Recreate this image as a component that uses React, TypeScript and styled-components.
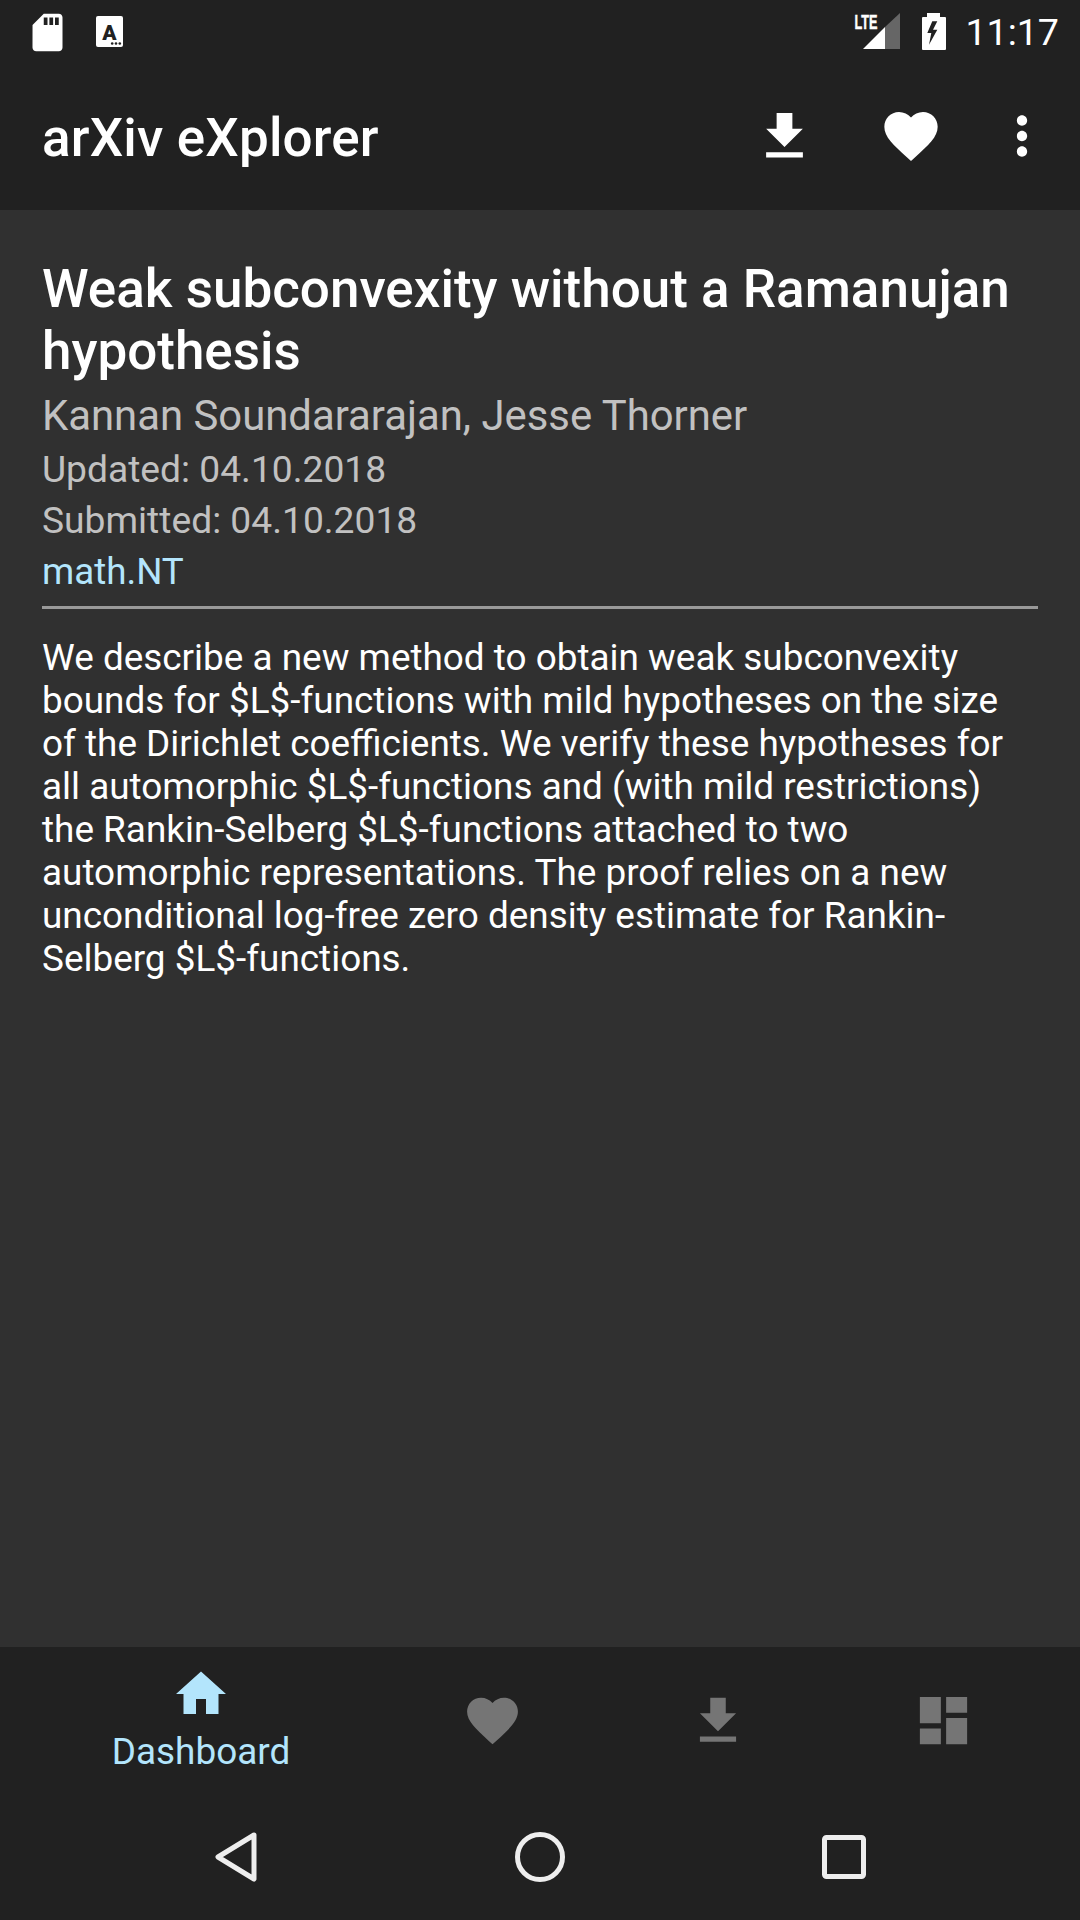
import React from 'react';
import styled, { createGlobalStyle } from 'styled-components';

const GlobalStyle = createGlobalStyle`
  html, body {
    margin: 0;
    padding: 0;
    background: #303030;
  }
  * {
    box-sizing: border-box;
  }
`;

const Screen = styled.div`
  width: 1080px;
  height: 1920px;
  display: flex;
  flex-direction: column;
  background: #303030;
  font-family: Roboto, 'Liberation Sans', sans-serif;
  overflow: hidden;
`;

const StatusBar = styled.div`
  height: 72px;
  flex: none;
  display: flex;
  align-items: center;
  justify-content: space-between;
  padding: 0 21px 8px 25px;
  background: #212121;
  color: #fff;
`;

const StatusGroup = styled.div`
  display: flex;
  align-items: center;
`;

const Clock = styled.span`
  margin-left: 19px;
  font-size: 37.6px;
  line-height: 48px;
`;

const AppBar = styled.header`
  height: 138px;
  flex: none;
  display: flex;
  align-items: center;
  justify-content: space-between;
  padding: 0 27px 6px 42px;
  background: #212121;
  color: #fff;
`;

const AppTitle = styled.h1`
  margin: 0;
  font-size: 53px;
  line-height: 62px;
  font-weight: 500;
  letter-spacing: 0.17px;
`;

const Actions = styled.div`
  display: grid;
  grid-template-columns: 94px 160px 62px;
  align-items: center;
  justify-items: center;
  margin-bottom: 4px;
`;

const Content = styled.main`
  flex: 1;
  padding: 48px 42px 0;
`;

const PaperTitle = styled.h2`
  margin: 0;
  font-size: 53px;
  line-height: 62px;
  font-weight: 500;
  color: #fff;
`;

const Authors = styled.div`
  margin-top: 10px;
  font-size: 41.85px;
  line-height: 47px;
  color: #c1c1c1;
`;

const Meta = styled.div<{ $accent?: boolean }>`
  font-size: ${({ $accent }) => ($accent ? '36.75px' : '37.2px')};
  line-height: 51px;
  color: ${({ $accent }) => ($accent ? '#b3e5fc' : '#c1c1c1')};
`;

const FirstMeta = styled(Meta)`
  margin-top: 5px;
`;

const Divider = styled.hr`
  height: 3px;
  margin: 9px 0 27px;
  border: 0;
  background: #999;
`;

const Abstract = styled.p`
  margin: 0;
  font-size: 36.9px;
  line-height: 43px;
  color: #fff;
`;

const BottomNav = styled.nav`
  height: 147px;
  flex: none;
  display: grid;
  grid-template-columns: 402px 180px 272px 178px;
  background: #212121;
`;

const Tab = styled.div<{ $active?: boolean }>`
  display: flex;
  flex-direction: column;
  align-items: center;
  justify-content: ${({ $active }) => ($active ? 'flex-start' : 'center')};
  padding-top: ${({ $active }) => ($active ? '17px' : '0')};
  color: ${({ $active }) => ($active ? '#b3e5fc' : '#757575')};
`;

const TabLabel = styled.span`
  margin-top: 7px;
  font-size: 36.9px;
  line-height: 42px;
`;

const SystemNav = styled.div`
  height: 126px;
  flex: none;
  display: grid;
  grid-template-columns: 472px 136px 472px;
  align-items: center;
  justify-items: center;
  background: #212121;
`;

const Glyph = styled.svg`
  display: block;
  flex: none;
`;

const KeyboardGlyph = styled(Glyph)`
  margin-left: 25px;
`;

const SignalGlyph = styled(Glyph)`
  margin-bottom: 6px;
`;

const BatteryGlyph = styled(Glyph)`
  margin-left: 22px;
`;

const Icon: React.FC<{ size: number; path: string }> = ({ size, path }) => (
  <Glyph width={size} height={size} viewBox="0 0 24 24" fill="currentColor">
    <path d={path} />
  </Glyph>
);

const paths = {
  sd: 'M18 2h-8L4.02 8 4 20c0 1.1.9 2 2 2h12c1.1 0 2-.9 2-2V4c0-1.1-.9-2-2-2zm-6 6h-2V4h2v4zm3 0h-2V4h2v4zm3 0h-2V4h2v4z',
  download: 'M19 9h-4V3H9v6H5l7 7 7-7zM5 18v2h14v-2H5z',
  heart: 'M12 21.35l-1.45-1.32C5.4 15.36 2 12.28 2 8.5 2 5.42 4.42 3 7.5 3c1.74 0 3.41.81 4.5 2.09C13.09 3.81 14.76 3 16.5 3 19.58 3 22 5.42 22 8.5c0 3.78-3.4 6.86-8.55 11.54L12 21.35z',
  more: 'M12 8c1.1 0 2-.9 2-2s-.9-2-2-2-2 .9-2 2 .9 2 2 2zm0 2c-1.1 0-2 .9-2 2s.9 2 2 2 2-.9 2-2-.9-2-2-2zm0 6c-1.1 0-2 .9-2 2s.9 2 2 2 2-.9 2-2-.9-2-2-2z',
  home: 'M10 20v-6h4v6h5v-8h3L12 3 2 12h3v8z',
  dashboard: 'M3 13h8V3H3v10zm0 8h8v-6H3v6zm10 0h8V11h-8v10zm0-18v6h8V3h-8z',
};

const KeyboardIcon = () => (
  <KeyboardGlyph width="30" height="32" viewBox="0 0 30 32">
    <rect x="1" y="0" width="27" height="31" rx="2" fill="#fff" />
    <text
      x="14.5"
      y="24"
      textAnchor="middle"
      fontFamily="Roboto, sans-serif"
      fontSize="21"
      fontWeight="900"
      fill="#212121"
    >
      A
    </text>
    <circle cx="17.2" cy="27.5" r="1.3" fill="#212121" />
    <circle cx="21" cy="27.5" r="1.3" fill="#212121" />
    <circle cx="24.8" cy="27.5" r="1.3" fill="#212121" />
  </KeyboardGlyph>
);

const SignalIcon = () => (
  <SignalGlyph width="46" height="44" viewBox="0 -6 46 44">
    <text
      x="0.5"
      y="16"
      fontFamily="'Liberation Sans', sans-serif"
      fontSize="20"
      fontWeight="700"
      fill="#fff"
      stroke="#fff"
      strokeWidth="0.5"
      textLength="23"
      lengthAdjust="spacingAndGlyphs"
    >
      LTE
    </text>
    <polygon points="9,36 31,14 31,36" fill="#fff" />
    <polygon points="31,14 46,0 46,36 31,36" fill="#666" />
  </SignalGlyph>
);

const BatteryIcon = () => (
  <BatteryGlyph width="24" height="38" viewBox="0 0 24 38">
    <path
      fillRule="evenodd"
      fill="#fff"
      d="M5 0h13v4h5a1 1 0 0 1 1 1v31a1 1 0 0 1-1 1H1a1 1 0 0 1-1-1V5a1 1 0 0 1 1-1h4zM15.3 8.3h-5L5.3 20h4L7 31.7l8.3-15H11z"
    />
  </BatteryGlyph>
);

const BackIcon = () => (
  <Glyph width="44" height="52" viewBox="0 0 44 52">
    <path d="M40 4 4 26l36 22z" fill="none" stroke="#eeeeee" strokeWidth="5" strokeLinejoin="round" />
  </Glyph>
);

const HomeKeyIcon = () => (
  <Glyph width="50" height="50" viewBox="0 0 50 50">
    <circle cx="25" cy="25" r="22.5" fill="none" stroke="#eeeeee" strokeWidth="5" />
  </Glyph>
);

const RecentsIcon = () => (
  <Glyph width="44" height="44" viewBox="0 0 44 44">
    <rect x="2.5" y="2.5" width="39" height="39" rx="2" fill="none" stroke="#eeeeee" strokeWidth="5" />
  </Glyph>
);

export default function App() {
  return (
    <Screen>
      <GlobalStyle />
      <StatusBar>
        <StatusGroup>
          <Icon size={45} path={paths.sd} />
          <KeyboardIcon />
        </StatusGroup>
        <StatusGroup>
          <SignalIcon />
          <BatteryIcon />
          <Clock>11:17</Clock>
        </StatusGroup>
      </StatusBar>
      <AppBar>
        <AppTitle>arXiv eXplorer</AppTitle>
        <Actions>
          <Icon size={63} path={paths.download} />
          <Icon size={64} path={paths.heart} />
          <Icon size={62} path={paths.more} />
        </Actions>
      </AppBar>
      <Content>
        <PaperTitle>Weak subconvexity without a Ramanujan hypothesis</PaperTitle>
        <Authors>Kannan Soundararajan, Jesse Thorner</Authors>
        <FirstMeta>Updated: 04.10.2018</FirstMeta>
        <Meta>Submitted: 04.10.2018</Meta>
        <Meta $accent>math.NT</Meta>
        <Divider />
        <Abstract>
          We describe a new method to obtain weak subconvexity bounds for $L$-functions with mild
          hypotheses on the size of the Dirichlet coefficients. We verify these hypotheses for all
          automorphic $L$-functions and (with mild restrictions) the Rankin-Selberg $L$-functions
          attached to two automorphic representations. The proof relies on a new unconditional
          log-free zero density estimate for Rankin-Selberg $L$-functions.
        </Abstract>
      </Content>
      <BottomNav>
        <Tab $active>
          <Icon size={60} path={paths.home} />
          <TabLabel>Dashboard</TabLabel>
        </Tab>
        <Tab>
          <Icon size={61} path={paths.heart} />
        </Tab>
        <Tab>
          <Icon size={62} path={paths.download} />
        </Tab>
        <Tab>
          <Icon size={63} path={paths.dashboard} />
        </Tab>
      </BottomNav>
      <SystemNav>
        <BackIcon />
        <HomeKeyIcon />
        <RecentsIcon />
      </SystemNav>
    </Screen>
  );
}
